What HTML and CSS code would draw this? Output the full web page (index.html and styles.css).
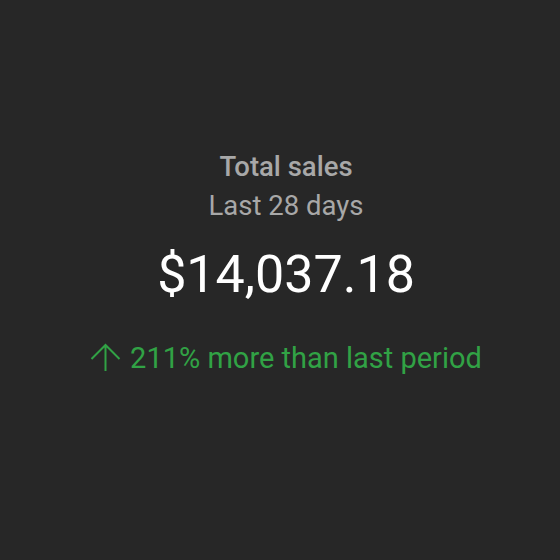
FILE: index.html
```html
<!DOCTYPE html>
<html>
<head>
<meta charset="utf-8">
<link rel="stylesheet" href="styles.css">
</head>
<body>
<div class="card">
  <div class="title">Total sales</div>
  <div class="period">Last 28 days</div>
  <div class="amount">$14,037.18</div>
  <div class="delta">
    <svg class="arrow" width="32" height="30" viewBox="0 0 32 30"><path d="M15.5 2V28M1.5 16L15.5 2L29.5 16" fill="none" stroke="currentColor" stroke-width="2"/></svg>
    <span>211% more than last period</span>
  </div>
</div>
</body>
</html>
```
FILE: styles.css
```css
html, body { margin: 0; padding: 0; }
body {
  background: #272727;
  font-family: Roboto, "Noto Sans", sans-serif;
  width: 560px;
  height: 560px;
}
.card {
  display: flex;
  flex-direction: column;
  align-items: center;
  padding: 151px 0 0 12px;
}
.title { color: #a8a8a8; font-size: 27.5px; font-weight: 500; line-height: 32px; }
.period { color: #a8a8a8; font-size: 27.5px; line-height: 32px; margin-top: 7px; }
.amount { color: #ffffff; font-size: 52px; line-height: 60px; margin-top: 23px; }
.delta { color: #31a245; font-size: 29px; line-height: 34px; display: flex; align-items: center; gap: 8px; margin-top: 36px; }
.arrow { display: block; }
```
